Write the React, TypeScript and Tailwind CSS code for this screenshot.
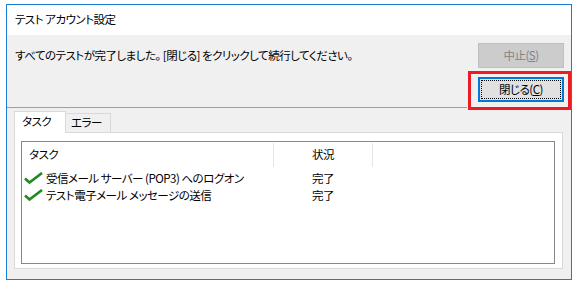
import React from "react";

const font =
  "font-['Noto_Sans_CJK_JP','Noto_Sans_CJK_SC',sans-serif] [font-feature-settings:'palt'] text-[11.5px] tracking-[-0.5px] leading-none text-black";

function Check() {
  return (
    <svg width="19" height="12" viewBox="0 0 19 12" className="shrink-0">
      <path d="M1 6.5 L5.5 10.5 L18 1" fill="none" stroke="#1f8a1f" strokeWidth="2.6" />
    </svg>
  );
}

const rows = ["受信メール サーバー (POP3) へのログオン", "テスト電子メール メッセージの送信"];

export default function App() {
  return (
    <div className={`w-[581px] h-[287px] bg-white pl-[6px] pt-[4px] ${font}`}>
      <div className="w-[566px] h-[276px] border border-[#1a7fd4] flex flex-col">
        {/* title */}
        <div className="h-[30px] bg-white pl-[8px] flex items-center">テスト アカウント設定</div>

        <div className="flex-1 bg-[#f0f0f0] flex flex-col">
          <div className="mt-[8px] h-[25px] flex items-center justify-between pl-[8px] pr-[7px]">
            <span>すべてのテストが完了しました。 [閉じる] をクリックして続行してください。</span>
            <button className="w-[86px] h-[25px] bg-[#cccccc] border border-[#bfbfbf] text-[#838383] flex items-center justify-center">
              中止(<span className="underline">S</span>)
            </button>
          </div>

          <div className="mt-[9px] flex justify-end pr-[7px]">
            <div className="relative">
              <button className="w-[86px] h-[25px] bg-[#e1e1e1] border-2 border-[#0078d7] flex items-center justify-center">
                <span className="absolute inset-[3px] border border-dotted border-black" />
                閉じる(<span className="underline">C</span>)
              </button>
              <div className="absolute top-[-6px] left-[-10px] right-[-7px] bottom-[-8px] border-[3px] border-[#ec1c24]" />
            </div>
          </div>

          <div className="mt-[5px] h-px w-[460px] bg-[#a0a0a0]" />

          {/* tabs */}
          <div className="mt-[3px] pl-[7px] flex items-end relative z-10">
            <div className="w-[52px] h-[22px] bg-white border border-b-0 border-[#d9d9d9] pl-[7px] flex items-center -mb-px pb-[1px]">
              タスク
            </div>
            <div className="w-[46px] h-[19px] bg-[#f0f0f0] border border-b-0 border-[#d9d9d9] -ml-px pl-[5px] flex items-center">
              エラー
            </div>
          </div>

          <div className="ml-[7px] w-[549px] h-[137px] bg-white border border-[#d9d9d9] pl-[6px] pt-[8px]">
            <div className="w-[534px] h-[123px] border border-[#828790] bg-white">
              <div className="h-[25px] flex">
                <div className="w-[251px] pl-[7px] flex items-center">タスク</div>
                <div className="w-px mt-[1px] bg-[#e5e5e5]" />
                <div className="w-[98px] flex items-center justify-center">状況</div>
                <div className="w-px mt-[1px] bg-[#e5e5e5]" />
              </div>
              <div className="mt-[2px]">
                {rows.map((r) => (
                  <div key={r} className="h-[17px] flex items-center">
                    <div className="w-[251px] pl-[2px] flex items-center gap-[3px]">
                      <Check />
                      <span className="pt-[2px]">{r}</span>
                    </div>
                    <div className="w-px" />
                    <div className="w-[98px] flex justify-center pt-[2px]">完了</div>
                  </div>
                ))}
              </div>
            </div>
          </div>
        </div>
      </div>
    </div>
  );
}
